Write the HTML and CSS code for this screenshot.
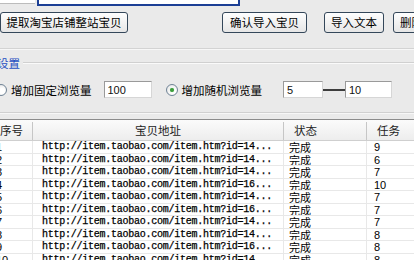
FILE: index.html
```html
<!DOCTYPE html>
<html lang="zh">
<head>
    <meta charset="UTF-8">
    <title>宝贝浏览量</title>
    <link rel="stylesheet" href="styles.css">
</head>
<body>
    <div class="app">
        <div class="top-strip">
            <div class="field-left"></div>
            <div class="field-main"></div>
        </div>

        <div class="toolbar">
            <button type="button" class="btn btn-fetch">提取淘宝店铺整站宝贝</button>
            <button type="button" class="btn btn-confirm">确认导入宝贝</button>
            <button type="button" class="btn btn-text">导入文本</button>
            <button type="button" class="btn btn-delete">删除宝贝</button>
        </div>

        <div class="divider"></div>

        <div class="group-head">
            <span class="group-title">设置</span>
            <span class="group-line"></span>
        </div>

        <div class="options">
            <span class="radio"></span>
            <span class="opt-label">增加固定浏览量</span>
            <input type="text" class="field field-fixed" value="100">
            <span class="radio radio-on"></span>
            <span class="opt-label">增加随机浏览量</span>
            <input type="text" class="field field-min" value="5">
            <span class="range-line"></span>
            <input type="text" class="field field-max" value="10">
        </div>

        <div class="group-foot"></div>

        <div class="list">
            <div class="list-head">
                <div class="hcell">序号</div>
                <div class="hcell hcell-center">宝贝地址</div>
                <div class="hcell">状态</div>
                <div class="hcell">任务</div>
            </div>
            <div id="rows"></div>
        </div>
    </div>

    <script>
        const items = [
            ['14', 9], ['14', 6], ['14', 7], ['16', 10], ['14', 7],
            ['16', 7], ['14', 7], ['14', 8], ['16', 8], ['14', 8]
        ];

        const rows = document.getElementById('rows');
        rows.innerHTML = items.map((item, i) => `
            <div class="row">
                <div class="cell cell-no">${i + 1}</div>
                <div class="cell cell-url">http://item.taobao.com/item.htm?id=${item[0]}...</div>
                <div class="cell cell-state">完成</div>
                <div class="cell cell-task">${item[1]}</div>
            </div>
        `).join('');
    </script>
</body>
</html>
```

FILE: styles.css
```css
body {
    margin: 0;
    background: #eaeaea;
    overflow: hidden;
    font-family: "Noto Sans CJK SC", sans-serif;
    font-size: 11.5px;
    color: #111;
}

.app {
    margin-left: -12px;
    width: 470px;
}

/* top edge of the text boxes above */
.top-strip {
    display: flex;
    height: 6px;
}

.field-left {
    width: 47px;
    height: 3px;
    background: #fff;
    border-bottom: 1px solid #bcbcbc;
}

.field-main {
    margin-left: 2px;
    width: 203px;
    height: 6px;
    box-sizing: border-box;
    background: #fff;
    border: 2px solid #1c3f95;
    border-top: none;
}

/* buttons */
.toolbar {
    display: flex;
    margin-top: 6px;
    height: 21px;
}

.btn {
    height: 21px;
    box-sizing: border-box;
    padding: 0;
    border: 1px solid #34475a;
    border-radius: 3px;
    background: linear-gradient(#fefefe, #e6e6e6);
    font: inherit;
    line-height: 19px;
    color: #000;
    text-align: center;
    white-space: nowrap;
    overflow: hidden;
}

.btn-fetch {
    margin-left: 12px;
    width: 128px;
}

.btn-confirm {
    margin-left: 94px;
    width: 85px;
}

.btn-text {
    margin-left: 17px;
    width: 60px;
}

.btn-delete {
    margin-left: 9px;
    width: 60px;
}

.divider {
    margin-top: 15px;
    border-top: 1px solid #d3d3d3;
    border-bottom: 1px solid #f7f7f7;
}

/* settings group */
.group-head {
    display: flex;
    align-items: center;
    margin-top: 6px;
    height: 14px;
}

.group-title {
    margin-left: 9px;
    line-height: 14px;
    color: #1f4fc2;
}

.group-line {
    flex: 1;
    margin-left: 3px;
    border-top: 1px solid #d0d0d0;
    border-bottom: 1px solid #fafafa;
}

.options {
    display: flex;
    align-items: center;
    margin-top: 11px;
    height: 17px;
}

.radio {
    width: 12px;
    height: 12px;
    box-sizing: border-box;
    border: 1px solid #6f8396;
    border-radius: 50%;
    background: radial-gradient(circle at 60% 60%, #ffffff 30%, #dcdcdc 100%);
    position: relative;
}

.radio:first-child {
    margin-left: 7px;
}

.radio-on {
    margin-left: 14px;
}

.radio-on::after {
    content: "";
    position: absolute;
    left: 3px;
    top: 3px;
    width: 4px;
    height: 4px;
    border-radius: 50%;
    background: #3c9c3c;
    box-shadow: 0 0 1px #7cc87c;
}

.opt-label {
    margin-left: 4px;
    white-space: nowrap;
    color: #000;
}

.field {
    height: 17px;
    box-sizing: border-box;
    padding: 0 3px;
    border: 1px solid #9a9a9a;
    border-right-color: #d6d6d6;
    border-bottom-color: #d6d6d6;
    background: #fff;
    font-family: "Liberation Sans", sans-serif;
    font-size: 11px;
    color: #111;
    outline: none;
}

.field-fixed {
    margin-left: 12px;
    width: 48px;
}

.field-min {
    margin-left: 21px;
    width: 40px;
}

.range-line {
    width: 22px;
    height: 2px;
    background: #3d3d3d;
}

.field-max {
    width: 47px;
}

.group-foot {
    margin-top: 14px;
    border-top: 1px solid #d0d0d0;
    border-bottom: 1px solid #f7f7f7;
}

/* list view */
.list {
    margin-top: 5px;
    margin-left: 1px;
    border-top: 1px solid #8c8c8c;
    border-left: 1px solid #8c8c8c;
    background: #fff;
}

.list-head,
.row {
    display: grid;
    grid-template-columns: 43px 251px 83px 80px;
}

.list-head {
    height: 21px;
    box-sizing: border-box;
    background: linear-gradient(#fbfbfb, #ededed);
    border-bottom: 1px solid #cfcfcf;
}

.hcell {
    margin-top: 2px;
    padding-left: 10px;
    line-height: 17px;
    color: #222;
    border-right: 1px solid #c6c6c6;
}

.hcell-center {
    padding-left: 0;
    text-align: center;
}

.row {
    height: 12.5px;
    box-sizing: border-box;
    border-bottom: 1px solid #e8e8e8;
    line-height: 12px;
}

.cell {
    border-right: 1px solid #e8e8e8;
    white-space: nowrap;
    overflow: hidden;
    color: #000;
}

.cell-no {
    padding-left: 6px;
    font-family: "Liberation Sans", sans-serif;
    font-size: 11px;
}

.cell-url {
    padding-left: 9px;
    font-family: "Liberation Mono", monospace;
    font-size: 10px;
    letter-spacing: -0.25px;
    -webkit-text-stroke: 0.25px #000;
}

.cell-state {
    padding-left: 5px;
    font-size: 11px;
}

.cell-task {
    padding-left: 7px;
    font-family: "Liberation Sans", sans-serif;
    font-size: 11px;
}
```
